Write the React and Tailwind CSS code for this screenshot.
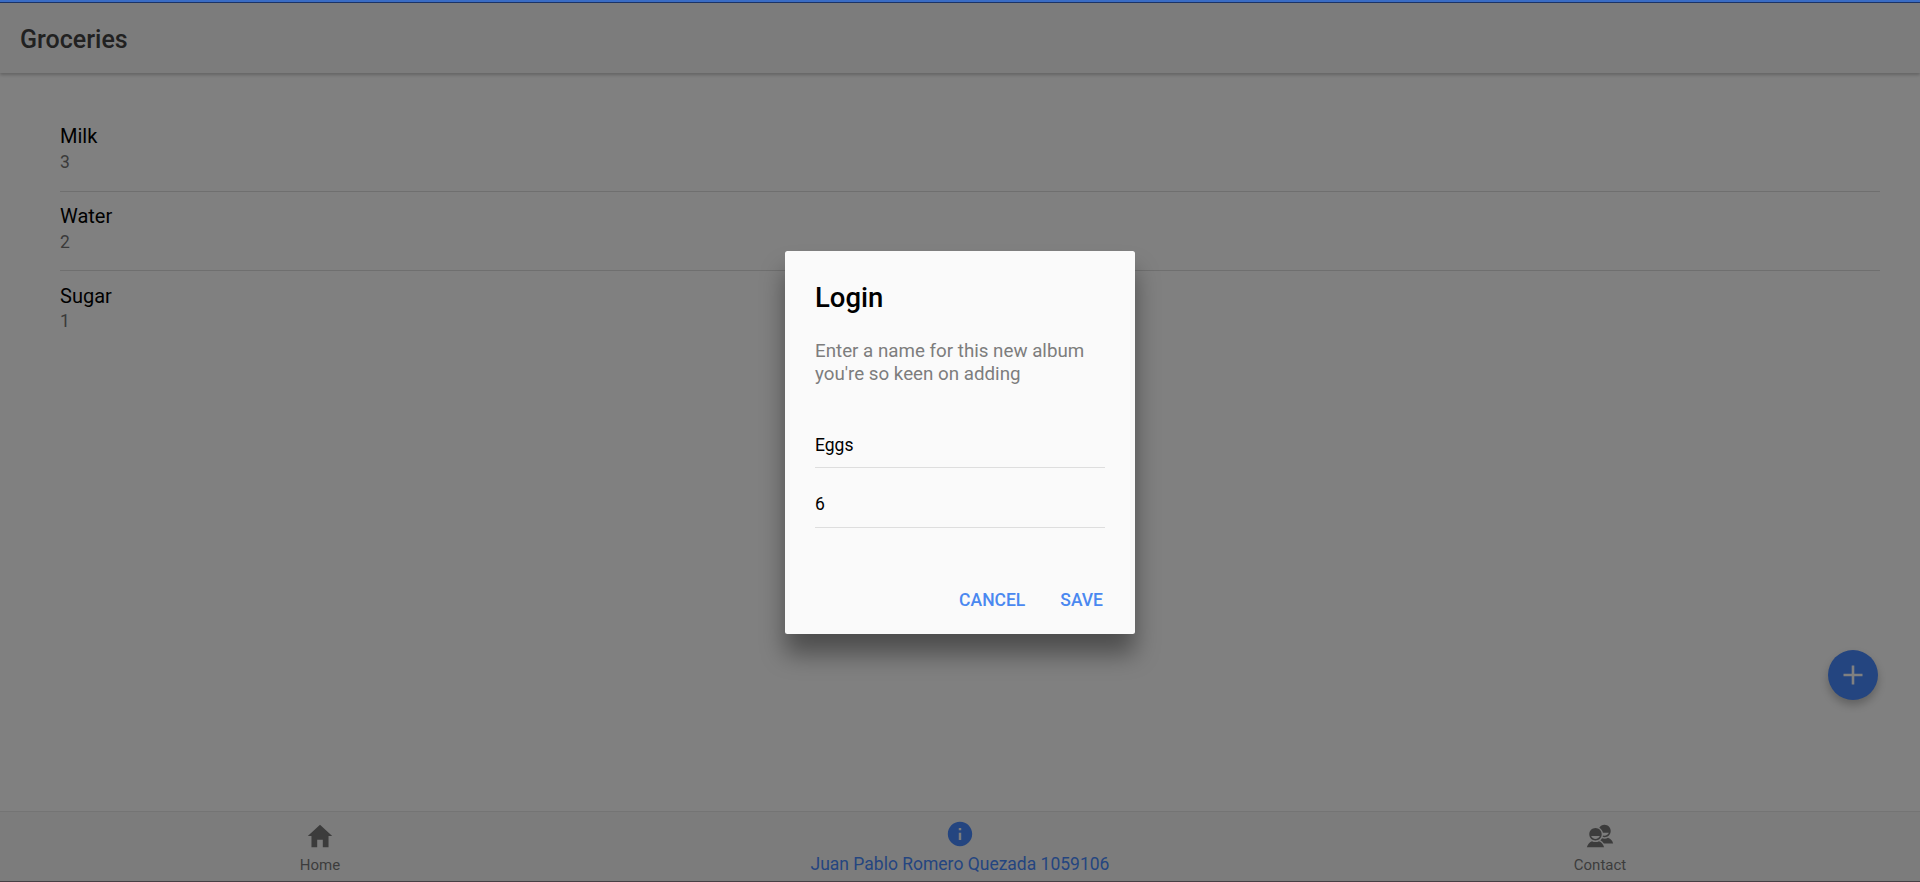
import React from "react";
import { IoMdHome, IoMdInformationCircle, IoMdContacts } from "react-icons/io";

const groceries = [
  { name: "Milk", quantity: 3 },
  { name: "Water", quantity: 2 },
  { name: "Sugar", quantity: 1 },
];

function GroceryRow({ name, quantity, last }) {
  return (
    <li className={last ? "h-[79px] pt-[13px]" : "h-[79.5px] border-b border-[#6f6f6f] pt-[12px]"}>
      <h2 className="text-[20px] leading-[24px] text-black">{name}</h2>
      <p className={last ? "mt-[3px] text-[17.5px] leading-[21px] text-[#3a3a3a]" : "mt-[4px] text-[17.5px] leading-[21px] text-[#3a3a3a]"}>
        {quantity}
      </p>
    </li>
  );
}

function Dialog() {
  return (
    <section className="flex h-[383px] w-[350px] flex-col rounded-[2.5px] bg-[#fafafa] shadow-[0_20px_25px_rgba(0,0,0,0.4)]">
      <h2 className="px-[30px] pt-[28px] text-[27.5px] leading-[37px] font-medium text-black">Login</h2>
      <p className="px-[30px] pt-[24px] text-[18.75px] leading-[23px] text-[#7d7d7d]">
        Enter a name for this new album you're so keen on adding
      </p>
      <div className="mt-[22px] flex flex-col px-[30px] text-[17.5px] text-black">
        <div className="flex h-[60px] items-end border-b border-[#dedede] pb-[11px] leading-[22px]">Eggs</div>
        <div className="flex h-[60px] items-end border-b border-[#dedede] pb-[12px] leading-[22px]">6</div>
      </div>
      <div className="mt-[54px] flex justify-end gap-[35px] pr-[32px] text-[17.5px] leading-[36px] font-medium text-[#4a88f0]">
        <button>CANCEL</button>
        <button>SAVE</button>
      </div>
    </section>
  );
}

export default function App() {
  return (
    <div className="grid h-[882px] w-[1920px] overflow-hidden bg-[#808080] font-[Roboto,sans-serif]">
      <main className="col-start-1 row-start-1 flex flex-col">
        <div className="h-[3px] border-b border-[#1c3468] bg-[#3a6cc4]" />
        <header className="flex h-[70px] items-center bg-[#7c7c7c] px-5 pt-[3px] shadow-[0_2px_3px_rgba(0,0,0,0.22)]">
          <h1 className="text-[25px] font-medium text-[#212121]">Groceries</h1>
        </header>
        <ul className="mt-[39px] mr-10 ml-[60px] flex-1">
          {groceries.map((item, i) => (
            <GroceryRow key={item.name} {...item} last={i === groceries.length - 1} />
          ))}
        </ul>
        <div className="mr-[42px] mb-[111px] flex size-[50px] items-center justify-center self-end rounded-full bg-[#244580] shadow-[0_5px_8px_rgba(0,0,0,0.24)]">
          <svg viewBox="0 0 20 20" className="size-5" fill="#808080">
            <path d="M8.7.5h2.6v8.2h8.2v2.6h-8.2v8.2H8.7v-8.2H.5V8.7h8.2z" />
          </svg>
        </div>
        <nav className="grid h-[70px] grid-cols-3 border-t border-[#747474] bg-[#7c7c7c] text-[#3c3c3c]">
          <div className="flex flex-col items-center pt-[9px]">
            <IoMdHome className="size-[30px]" />
            <span className="mt-[5px] text-[15px] leading-[18px]">Home</span>
          </div>
          <div className="flex flex-col items-center pt-[7px] text-[#244580]">
            <IoMdInformationCircle className="size-[30px]" />
            <span className="mt-[5px] text-[17.5px] leading-[20px]">Juan Pablo Romero Quezada 1059106</span>
          </div>
          <div className="flex flex-col items-center pt-[9px]">
            <IoMdContacts className="size-[30px]" />
            <span className="mt-[5px] text-[15px] leading-[18px]">Contact</span>
          </div>
        </nav>
        <div className="h-px bg-[#463f44]" />
      </main>
      <div className="col-start-1 row-start-1 flex items-start justify-center pt-[251px]">
        <Dialog />
      </div>
    </div>
  );
}
